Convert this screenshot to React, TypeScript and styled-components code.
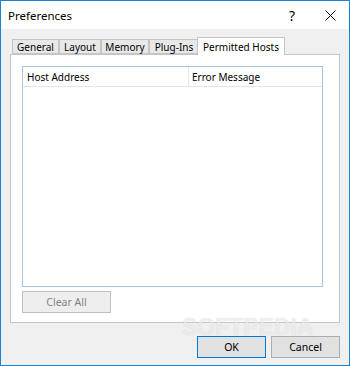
import React from 'react';
import styled, { createGlobalStyle } from 'styled-components';

const GlobalStyle = createGlobalStyle`
  html, body {
    margin: 0;
    padding: 0;
    background: #ffffff;
  }
  * {
    box-sizing: border-box;
  }
`;

const Window = styled.div`
  position: relative;
  width: 350px;
  height: 366px;
  display: flex;
  flex-direction: column;
  border: 1px solid #1883d7;
  font-family: "Noto Sans", "Liberation Sans", sans-serif;
  font-size: 10px;
  color: #000000;
  overflow: hidden;
`;

const TitleBar = styled.div`
  height: 28px;
  background: #ffffff;
  display: flex;
  align-items: center;
  padding-left: 7px;
`;

const Title = styled.span`
  flex: 1;
  font-size: 11.5px;
`;

const TitleButton = styled.div`
  width: 38px;
  height: 28px;
  display: flex;
  align-items: center;
  justify-content: center;
  font-size: 14px;
`;

const Body = styled.div`
  flex: 1;
  background: #f0f0f0;
  padding: 8px 9px 8px 9px;
  display: flex;
  flex-direction: column;
`;

const TabStrip = styled.div`
  height: 17px;
  display: flex;
  align-items: flex-end;
  padding-left: 2px;
  position: relative;
  z-index: 1;
`;

const Tab = styled.div<{ $active?: boolean; $width: number }>`
  width: ${p => p.$width}px;
  height: ${p => (p.$active ? '18px' : '15px')};
  margin-bottom: ${p => (p.$active ? '-1px' : '0')};
  margin-left: ${p => (p.$active ? '-2px' : '0')};
  display: flex;
  align-items: center;
  justify-content: center;
  background: ${p => (p.$active ? '#ffffff' : '#e8e8e8')};
  border: 1px solid #c5c5c5;
  border-bottom: ${p => (p.$active ? 'none' : '1px solid #c5c5c5')};
  position: relative;
  z-index: ${p => (p.$active ? 1 : 0)};
  & + & {
    border-left: ${p => (p.$active ? '1px solid #c5c5c5' : 'none')};
  }
`;

const Panel = styled.div`
  height: 269px;
  background: #ffffff;
  border: 1px solid #c5c5c5;
  padding: 11px 16px 8px 11px;
  display: flex;
  flex-direction: column;
  gap: 4px;
`;

const ListBox = styled.div`
  height: 221px;
  border: 1px solid #a5c7e4;
  display: flex;
  flex-direction: column;
`;

const HeaderRow = styled.div`
  height: 20px;
  display: grid;
  grid-template-columns: 165px 1fr;
  border-bottom: 1px solid #e5e5e5;
`;

const HeaderCell = styled.div`
  display: flex;
  align-items: center;
  padding-left: 4px;
  & + & {
    border-left: 1px solid #e5e5e5;
    padding-left: 3px;
  }
`;

const Button = styled.button<{ $default?: boolean }>`
  height: 22px;
  padding: 0;
  font-family: inherit;
  font-size: 10.5px;
  color: ${p => (p.disabled ? '#838383' : '#000000')};
  background: ${p => (p.disabled ? '#eeeeee' : '#e1e1e1')};
  border: 1px solid ${p => (p.disabled ? '#bfbfbf' : p.$default ? '#0078d7' : '#adadad')};
`;

const ClearButton = styled(Button)`
  width: 89px;
`;

const Footer = styled.div`
  margin-top: 13px;
  display: flex;
  justify-content: flex-end;
  gap: 5px;
`;

const DialogButton = styled(Button)`
  width: 69px;
`;

const Watermark = styled.div`
  position: absolute;
  left: 181px;
  top: 315px;
  font-family: "Liberation Sans", sans-serif;
  font-weight: bold;
  font-size: 23px;
  line-height: 1;
  color: rgba(255, 255, 255, 0.6);
  text-shadow: 0 0 1px rgba(120, 120, 120, 0.3);
  pointer-events: none;
`;

const CloseIcon = () => (
  <svg width="11" height="11" viewBox="0 0 11 11">
    <path d="M0.5 0.5 L10.5 10.5 M10.5 0.5 L0.5 10.5" stroke="#000" strokeWidth="1" />
  </svg>
);

const tabs = [
  { label: 'General', width: 47 },
  { label: 'Layout', width: 42 },
  { label: 'Memory', width: 48 },
  { label: 'Plug-Ins', width: 50 },
];

export default function App() {
  return (
    <>
      <GlobalStyle />
      <Window>
        <TitleBar>
          <Title>Preferences</Title>
          <TitleButton>?</TitleButton>
          <TitleButton>
            <CloseIcon />
          </TitleButton>
        </TitleBar>
        <Body>
          <TabStrip>
            {tabs.map(t => (
              <Tab key={t.label} $width={t.width}>{t.label}</Tab>
            ))}
            <Tab $active $width={88}>Permitted Hosts</Tab>
          </TabStrip>
          <Panel>
            <ListBox>
              <HeaderRow>
                <HeaderCell>Host Address</HeaderCell>
                <HeaderCell>Error Message</HeaderCell>
              </HeaderRow>
            </ListBox>
            <ClearButton disabled>Clear All</ClearButton>
          </Panel>
          <Footer>
            <DialogButton $default>OK</DialogButton>
            <DialogButton>Cancel</DialogButton>
          </Footer>
        </Body>
        <Watermark>SOFTPEDIA</Watermark>
      </Window>
    </>
  );
}
